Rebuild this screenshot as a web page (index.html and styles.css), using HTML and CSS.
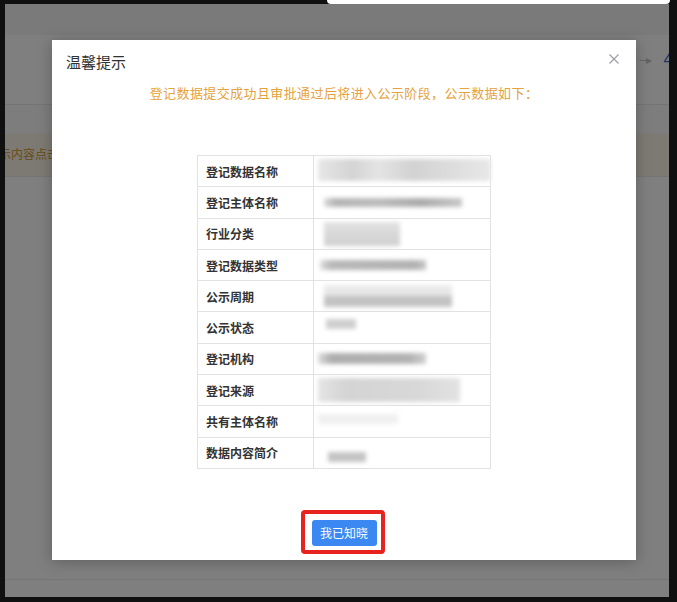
FILE: index.html
```html
<!DOCTYPE html>
<html lang="zh-CN">
<head>
<meta charset="utf-8">
<title>温馨提示</title>
<link rel="stylesheet" href="styles.css">
</head>
<body>
<div class="topbar"><div class="tab"></div></div>
<div class="screen">
  <div class="page">
    <div class="page-head"></div>
    <div class="steps">
      <span class="step-arrow">--&#9656;</span>
      <span class="step-num">4</span>
    </div>
    <div class="gap"></div>
    <div class="alert"><span class="alert-text">示内容点击</span></div>
    <div class="content"></div>
    <div class="page-foot"></div>
  </div>
  <div class="mask"></div>
  <div class="modal">
    <div class="modal-header">
      <span class="modal-title">温馨提示</span>
      <svg class="close" viewBox="0 0 10 10" width="10" height="10"><path d="M0.5 0.5L9.5 9.5M9.5 0.5L0.5 9.5" stroke="#9a9ca2" stroke-width="1.1" fill="none"/></svg>
    </div>
    <p class="notice">登记数据提交成功且审批通过后将进入公示阶段，公示数据如下：</p>
    <table class="info">
      <tr><th>登记数据名称</th><td><div class="blur b1"></div></td></tr>
      <tr><th>登记主体名称</th><td><div class="blur b2"></div></td></tr>
      <tr><th>行业分类</th><td><div class="blur b3"></div></td></tr>
      <tr><th>登记数据类型</th><td><div class="blur b4"></div></td></tr>
      <tr><th>公示周期</th><td><div class="blur b5"></div></td></tr>
      <tr><th>公示状态</th><td><div class="blur b6"></div></td></tr>
      <tr><th>登记机构</th><td><div class="blur b7"></div></td></tr>
      <tr><th>登记来源</th><td><div class="blur b8"></div></td></tr>
      <tr><th>共有主体名称</th><td><div class="blur b9"></div></td></tr>
      <tr><th>数据内容简介</th><td><div class="blur b10"></div></td></tr>
    </table>
    <div class="footer">
      <div class="highlight"><button class="ok">我已知晓</button></div>
    </div>
  </div>
</div>
</body>
</html>
```
FILE: styles.css
```css
html, body {
  margin: 0;
  padding: 0;
}
body {
  width: 677px;
  height: 602px;
  background: #101010;
  overflow: hidden;
  font-family: "Noto Sans CJK SC", "Microsoft YaHei", sans-serif;
}
.topbar {
  height: 4px;
  position: relative;
}
.tab {
  margin-left: 327px;
  width: 343px;
  height: 4px;
  background: #fff;
  border-radius: 0 0 5px 5px;
}
.screen {
  position: relative;
  margin-left: 5px;
  width: 664px;
  height: 593px;
  overflow: hidden;
}
.page {
  display: flex;
  flex-direction: column;
  height: 100%;
  background: #fff;
}
.page-head {
  height: 31px;
  background: #f4f4f4;
}
.steps {
  height: 70px;
  display: flex;
  align-items: center;
  justify-content: flex-end;
  gap: 13px;
  margin-right: -4px;
  padding-bottom: 22px;
  box-sizing: border-box;
  background: #fff;
  border-bottom: 1px solid #e8e8e8;
}
.step-arrow {
  font-size: 12px;
  color: #c4c4c4;
  letter-spacing: -1px;
}
.step-num {
  font-size: 17px;
  color: #3c6cd0;
}
.gap {
  height: 29px;
  background: #fbfbfb;
}
.alert {
  height: 42px;
  background: #fbf3e6;
  border-bottom: 1px solid #e9e9e9;
  display: flex;
  align-items: center;
  overflow: hidden;
}
.alert-text {
  margin-left: -6px;
  margin-top: -3px;
  font-size: 12px;
  color: #d09a2c;
  white-space: nowrap;
}
.content {
  flex: 1;
  background: #fefefe;
  border-bottom: 1px solid #ececec;
}
.page-foot {
  height: 17px;
  background: #fff;
}
.mask {
  position: absolute;
  inset: 0;
  background: rgba(0, 0, 0, 0.5);
}
.modal {
  position: absolute;
  left: 47px;
  top: 36px;
  width: 584px;
  height: 520px;
  background: #fff;
  box-shadow: 0 2px 14px rgba(0, 0, 0, 0.25);
  display: flex;
  flex-direction: column;
  align-items: center;
}
.modal-header {
  align-self: stretch;
  display: flex;
  justify-content: space-between;
  align-items: flex-start;
  padding: 12px 17px 0 14px;
}
.modal-title {
  font-size: 15px;
  line-height: 20px;
  color: #303133;
}
.close {
  margin-top: 2px;
}
.notice {
  margin: 12px 0 0;
  font-size: 13px;
  line-height: 18px;
  letter-spacing: 0.4px;
  color: #e6a23c;
}
.info {
  margin-top: 53px;
  border-collapse: collapse;
  width: 294px;
}
.info th,
.info td {
  border: 1px solid #e2e2e2;
  height: 31.3px;
  padding: 0;
  box-sizing: border-box;
}
.info th {
  width: 116px;
  text-align: left;
  padding-left: 8px;
  font-size: 12px;
  font-weight: bold;
  color: #333;
}
.info td {
  position: relative;
}
.blur {
  filter: blur(2px);
}
.b1 {
  margin: -2px -1px 0 4px;
  height: 22px;
  background: linear-gradient(90deg, #e6e6e6 0%, #d4d4d4 20%, #e4e4e4 35%, #d2d2d2 55%, #dedede 80%, #e8e8e8 100%);
}
.b2 {
  margin-left: 10px;
  width: 138px;
  height: 9px;
  background: linear-gradient(90deg, #dcdcdc 0%, #b4b4b4 8%, #bcbcbc 40%, #aaaaaa 70%, #c8c8c8 100%);
}
.b3 {
  margin-left: 10px;
  width: 76px;
  height: 24px;
  background: linear-gradient(180deg, #e2e2e2 0%, #d8d8d8 50%, #d0d0d0 100%);
}
.b4 {
  margin-left: 6px;
  width: 106px;
  height: 10px;
  background: linear-gradient(90deg, #e0e0e0 0%, #b8b8b8 10%, #b2b2b2 90%, #c6c6c6 100%);
}
.b5 {
  margin-left: 10px;
  width: 128px;
  height: 22px;
  background: linear-gradient(180deg, #ececec 0%, #e6e6e6 45%, #c2c2c2 55%, #c4c4c4 100%);
}
.b6 {
  margin: -8px 0 0 12px;
  width: 30px;
  height: 10px;
  background: #cfcfcf;
}
.b7 {
  margin-left: 4px;
  width: 108px;
  height: 11px;
  background: linear-gradient(90deg, #dcdcdc 0%, #aeaeae 12%, #b2b2b2 85%, #d0d0d0 100%);
}
.b8 {
  margin-left: 4px;
  width: 142px;
  height: 24px;
  background: linear-gradient(90deg, #e4e4e4 0%, #d4d4d4 20%, #d8d8d8 70%, #e2e2e2 100%);
}
.b9 {
  margin: -6px 0 0 4px;
  width: 80px;
  height: 10px;
  background: #f0f0f0;
}
.b10 {
  margin: 8px 0 0 14px;
  width: 38px;
  height: 10px;
  background: #c4c4c4;
}
.footer {
  margin-top: 41px;
  display: flex;
  justify-content: center;
  margin-right: 3px;
}
.highlight {
  border: 4px solid #e8221e;
  border-radius: 4px;
  padding: 6px 4px 4px 7px;
}
.ok {
  display: block;
  width: 65px;
  height: 26px;
  border: none;
  border-radius: 3px;
  background: #3b88f2;
  color: #fff;
  font-family: "Noto Sans CJK SC", sans-serif;
  font-size: 12px;
  padding: 0;
}
```
